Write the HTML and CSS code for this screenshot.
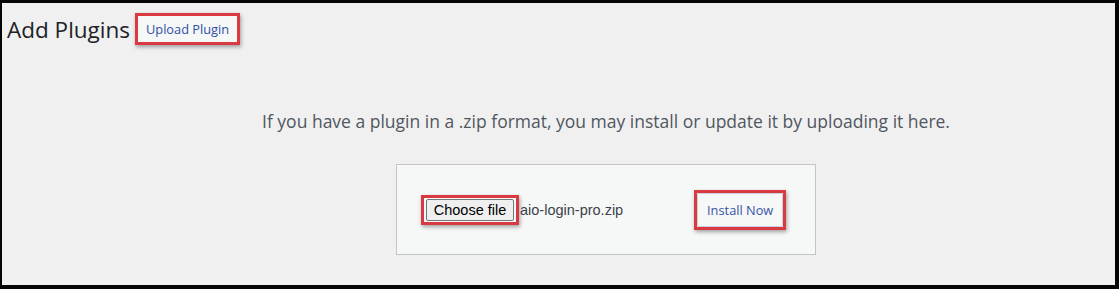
FILE: index.html
```html
<!DOCTYPE html>
<html lang="en">
<head>
    <meta charset="UTF-8" />
    <title>Add Plugins</title>
    <link rel="stylesheet" href="styles.css">
</head>
<body>

    <div class="frame">

        <!-- Page title -->
        <div class="title-row">
            <h1>Add Plugins</h1>
            <div class="mark mark-upload">
                <a class="upload-link" href="#">Upload Plugin</a>
            </div>
        </div>

        <div class="content">
            <p class="intro">If you have a plugin in a .zip format, you may install or update it by uploading it here.</p>

            <!-- Upload form -->
            <div class="upload-box">
                <div class="mark mark-choose">
                    <button class="choose-btn">Choose file</button>
                </div>
                <span class="file-name">aio-login-pro.zip</span>
                <div class="mark mark-install">
                    <button class="install-btn">Install Now</button>
                </div>
            </div>
        </div>

    </div>

</body>
</html>
```

FILE: styles.css
```css
body {
    margin: 0;
    padding: 0;
    background: #000;
    font-family: 'Open Sans', sans-serif;
}

.frame {
    height: 289px;
    box-sizing: border-box;
    border-style: solid;
    border-color: #050505;
    border-width: 3px 4px 4px 2px;
    background: #f0f0f1;
}

.title-row {
    display: flex;
    align-items: center;
    padding: 10px 0 0 5px;
}

h1 {
    margin: 0;
    font-size: 22.5px;
    font-weight: 400;
    color: #1d2327;
}

/* red highlight boxes */
.mark {
    border: 3px solid #d93a41;
    box-shadow: 1px 2px 4px rgba(0, 0, 0, 0.35);
    display: flex;
}

.mark-upload {
    margin-left: 5px;
    width: 99px;
    height: 26px;
    background: #f6f7f7;
    justify-content: center;
    align-items: center;
}

.upload-link {
    font-size: 12.8px;
    color: #2f4fa3;
    text-decoration: none;
}

.content {
    padding-left: 95px;
}

.intro {
    margin: 64px 0 0;
    text-align: center;
    font-size: 17.5px;
    line-height: 24px;
    color: #50575e;
}

.upload-box {
    width: 420px;
    height: 91px;
    margin: 31px auto 0;
    background: #f6f7f7;
    border: 1px solid #c3c4c7;
    display: flex;
    align-items: center;
    padding-left: 24px;
    box-sizing: border-box;
}

.mark-choose {
    padding: 1px 2px;
}

.choose-btn {
    width: 88px;
    height: 22px;
    padding: 0;
    font-family: 'Liberation Sans', Arial, sans-serif;
    font-size: 14.5px;
    color: #000;
    background: #efefef;
    border: 1px solid #767676;
    border-radius: 2px;
}

.file-name {
    margin-left: 1px;
    font-family: 'Liberation Sans', Arial, sans-serif;
    font-size: 14.5px;
    color: #3c434a;
}

.mark-install {
    margin-left: 71px;
}

.install-btn {
    width: 86px;
    height: 34px;
    padding: 0;
    font-family: 'Open Sans', sans-serif;
    font-size: 12.8px;
    color: #3555a5;
    background: #f6f7f7;
    border: 1px solid #c9cfe3;
    border-radius: 2px;
}
```
